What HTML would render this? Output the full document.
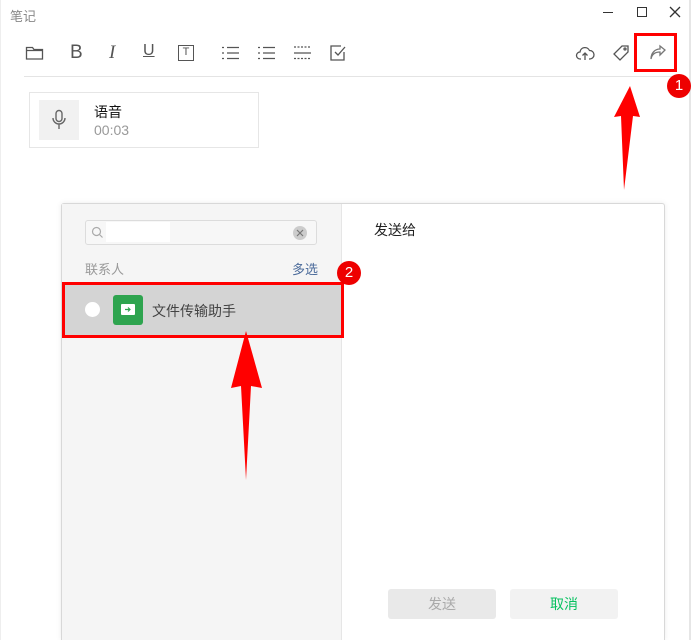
<!DOCTYPE html>
<html style="overflow:hidden;height:640px"><head><meta charset="utf-8"><style>
*{margin:0;padding:0;box-sizing:border-box}
body{width:691px;height:640px;background:#fff;position:relative;overflow:hidden;font-family:"Liberation Sans","Noto Sans CJK SC",sans-serif}
.abs{position:absolute}
svg{position:absolute;overflow:visible}
</style></head><body>
<div class="abs" style="left:0;top:0;width:1px;height:640px;background:#eee"></div>
<div class="abs" style="right:0;top:0;width:2px;height:640px;background:#e6e6e6"></div>
<div class="abs" style="left:10px;top:6px;font-size:13px;color:#888">笔记</div>
<div class="abs" style="left:603px;top:12px;width:10px;height:1px;background:#333"></div>
<div class="abs" style="left:637px;top:7px;width:10px;height:10px;border:1.2px solid #333"></div>
<svg style="left:670px;top:7px" width="10" height="10"><path d="M0 0L10 10M10 0L0 10" stroke="#333" stroke-width="1.3"/></svg>
<svg style="left:26px;top:46px" width="17" height="14" fill="none" stroke="#555" stroke-width="1.3"><path d="M0.5 1.5h6l1.5 2h8.5v9.5h-16z M0.5 4.5h16"/></svg>
<div class="abs" style="left:70px;top:42px;font-size:19px;color:#555">B</div>
<div class="abs" style="left:109px;top:42px;font-size:19px;color:#555;font-family:'Liberation Serif',serif;font-style:italic">I</div>
<div class="abs" style="left:143px;top:42px;font-size:16px;color:#555;text-decoration:underline">U</div>
<div class="abs" style="left:178px;top:45px;width:16px;height:16px;border:1.3px solid #555;font-size:11px;line-height:13px;text-align:center;color:#555">T</div>
<svg style="left:222px;top:46px" width="17" height="14" stroke="#555" stroke-width="1.2"><path d="M0 1.5h2M0 7h2M0 12.5h2M5 1.5h12M5 7h12M5 12.5h12"/></svg>
<svg style="left:258px;top:46px" width="17" height="14" stroke="#555" stroke-width="1.2"><path d="M0 1.5h2M0 7h2M0 12.5h2M5 1.5h12M5 7h12M5 12.5h12"/></svg>
<svg style="left:294px;top:46px" width="17" height="14" stroke="#555" stroke-width="1.2"><path d="M0 1h17M0 12.5h17" stroke-dasharray="2 1.5"/><path d="M0 7h17"/></svg>
<svg style="left:330px;top:45px" width="16" height="16" fill="none" stroke="#555" stroke-width="1.3"><path d="M14 7v8H1V1h10"/><path d="M5 7l3 3 7-8"/></svg>
<svg style="left:576px;top:45px" width="18" height="16" fill="none" stroke="#555" stroke-width="1.3"><path d="M5 14H4a3.5 3.5 0 0 1 0-7 5 5 0 0 1 9.5-1.5 4 4 0 0 1 0.5 8.5h-1"/><path d="M9 15V8M6.5 10.5L9 8l2.5 2.5"/></svg>
<svg style="left:613px;top:45px" width="17" height="17" fill="none" stroke="#555" stroke-width="1.3"><path d="M9 1h6v6l-8 8-6-6z"/><circle cx="12" cy="4" r="1"/></svg>
<svg style="left:650px;top:46px" width="16" height="14" fill="none" stroke="#777" stroke-width="1.3"><path d="M1 13c1-5 4-7 9-7V9l5-5-5-4v3C5 3 1 7 1 13z"/></svg>
<div class="abs" style="left:24px;top:76px;width:652px;height:1px;background:#e4e4e4"></div>
<div class="abs" style="left:634px;top:33px;width:43px;height:39px;border:3px solid #f00"></div>
<div class="abs" style="left:667px;top:74px;width:24px;height:24px;border-radius:50%;background:#e00;color:#fff;font-size:15px;text-align:center;line-height:24px">1</div>
<div class="abs" style="left:29px;top:92px;width:230px;height:56px;border:1px solid #e6e6e6"></div>
<div class="abs" style="left:39px;top:100px;width:40px;height:40px;background:#f1f1f1"></div>
<svg style="left:52px;top:110px" width="14" height="20" fill="none" stroke="#666" stroke-width="1.4"><rect x="4" y="0.5" width="6" height="11" rx="3"/><path d="M1 8a6 6 0 0 0 12 0M7 14v5"/></svg>
<div class="abs" style="left:94px;top:102px;font-size:14px;color:#111">语音</div>
<div class="abs" style="left:94px;top:122px;font-size:14px;color:#999">00:03</div>
<div class="abs" style="left:61px;top:203px;width:604px;height:437px;border:1px solid #d8d8d8;border-bottom:none;border-radius:3px 3px 0 0;background:#fff;box-shadow:0 0 6px rgba(0,0,0,.08)"></div>
<div class="abs" style="left:62px;top:204px;width:280px;height:436px;background:#f5f5f5;border-right:1px solid #e6e6e6"></div>
<div class="abs" style="left:85px;top:220px;width:232px;height:25px;border:1px solid #dcdcdc;border-radius:3px;background:#f7f7f7"></div>
<div class="abs" style="left:106px;top:222px;width:64px;height:20px;background:#fff"></div>
<svg style="left:92px;top:227px" width="11" height="11" fill="none" stroke="#aaa" stroke-width="1.2"><circle cx="4.5" cy="4.5" r="4"/><path d="M7.5 7.5L10.5 10.5"/></svg>
<div class="abs" style="left:293px;top:226px;width:14px;height:14px;border-radius:50%;background:#ccc"></div>
<svg style="left:297px;top:230px" width="6" height="6"><path d="M0 0L6 6M6 0L0 6" stroke="#777" stroke-width="1.2"/></svg>
<div class="abs" style="left:85px;top:259px;font-size:13px;color:#999">联系人</div>
<div class="abs" style="left:292px;top:259px;font-size:13px;color:#4a6a9a">多选</div>
<div class="abs" style="left:64px;top:284px;width:277px;height:52px;background:#d4d4d4"></div>
<div class="abs" style="left:62px;top:282px;width:282px;height:56px;border:3px solid #f00"></div>
<div class="abs" style="left:337px;top:261px;width:24px;height:24px;border-radius:50%;background:#e00;color:#fff;font-size:15px;text-align:center;line-height:24px">2</div>
<div class="abs" style="left:85px;top:302px;width:15px;height:15px;border-radius:50%;background:#fff"></div>
<div class="abs" style="left:113px;top:295px;width:30px;height:30px;border-radius:3px;background:#2ea44f"></div>
<div class="abs" style="left:121px;top:304px;width:14px;height:11px;background:#fff;border-radius:1px"></div>
<svg style="left:125px;top:307px" width="6" height="5"><path d="M0 2.5h5M3 0.5l2 2-2 2" stroke="#2ea44f" stroke-width="1.2" fill="none"/></svg>
<div class="abs" style="left:152px;top:301px;font-size:14px;color:#444">文件传输助手</div>
<div class="abs" style="left:374px;top:220px;font-size:14px;color:#222">发送给</div>
<div class="abs" style="left:388px;top:589px;width:108px;height:30px;border-radius:3px;background:#e9e9e9;color:#aaa;font-size:14px;text-align:center;line-height:31px">发送</div>
<div class="abs" style="left:510px;top:589px;width:108px;height:30px;border-radius:3px;background:#f2f2f2;color:#07c160;font-size:14px;text-align:center;line-height:31px">取消</div>
<svg style="left:0;top:0" width="691" height="640"><path d="M630 86L640 117L633 116L624 190L621 116L614 117Z" fill="#f00"/><path d="M246 331L262 388L251 386L246 480L241 386L231 388Z" fill="#f00"/></svg>
</body></html>
